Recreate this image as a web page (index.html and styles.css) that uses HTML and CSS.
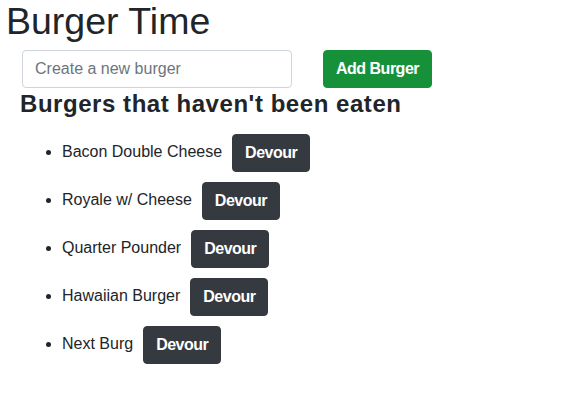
FILE: index.html
```html
<!DOCTYPE html>
<html lang="en">
<head>
<meta charset="utf-8">
<title>Burger Time</title>
<link rel="stylesheet" href="styles.css">
</head>
<body>
<h1 class="title">Burger Time</h1>
<div class="content">
  <form class="add-form">
    <input class="form-input" type="text" placeholder="Create a new burger">
    <button class="btn btn-success" type="button">Add Burger</button>
  </form>
  <h2 class="section-title">Burgers that haven't been eaten</h2>
  <ul class="burger-list">
    <li class="burger-item">Bacon Double Cheese<button class="btn btn-dark" type="button">Devour</button></li>
    <li class="burger-item">Royale w/ Cheese<button class="btn btn-dark" type="button">Devour</button></li>
    <li class="burger-item">Quarter Pounder<button class="btn btn-dark" type="button">Devour</button></li>
    <li class="burger-item">Hawaiian Burger<button class="btn btn-dark" type="button">Devour</button></li>
    <li class="burger-item">Next Burg<button class="btn btn-dark" type="button">Devour</button></li>
  </ul>
</div>
</body>
</html>
```
FILE: styles.css
```css
html, body {
  margin: 0;
  padding: 0;
  background: #fff;
}
body {
  font-family: "Liberation Sans", Arial, sans-serif;
  font-size: 16px;
  line-height: 24px;
  color: #212529;
}
.title {
  margin: 0 0 0 6px;
  padding-top: 2px;
  font-size: 37.5px;
  font-weight: 400;
  line-height: 38px;
}
.content {
  padding-left: 22px;
}
.add-form {
  display: flex;
  margin: 10px 0 0 0;
}
.form-input {
  box-sizing: border-box;
  width: 270px;
  height: 38px;
  padding: 6px 12px;
  border: 1px solid #ced4da;
  border-radius: 4px;
  font-family: inherit;
  font-size: 16px;
  line-height: 24px;
  color: #495057;
  outline: none;
}
.form-input::placeholder {
  color: #6c757d;
  opacity: 1;
}
.btn {
  display: inline-block;
  box-sizing: border-box;
  height: 38px;
  padding: 6px 12px;
  border: 1px solid transparent;
  border-radius: 4px;
  font-family: inherit;
  font-size: 16px;
  font-weight: 700;
  letter-spacing: -0.5px;
  line-height: 24px;
  color: #fff;
  vertical-align: middle;
  cursor: pointer;
}
.btn-success {
  margin-left: 31px;
  background: #16913a;
  border-color: #16913a;
}
.btn-dark {
  margin-left: 10px;
  background: #343a40;
  border-color: #343a40;
}
.section-title {
  margin: 2px 0 0 -2px;
  font-size: 24px;
  font-weight: 700;
  letter-spacing: 0.55px;
  line-height: 28px;
}
.burger-list {
  margin: 16px 0 0 0;
  padding-left: 40px;
}
.burger-item {
  margin-bottom: 10px;
  line-height: 24px;
}
```
